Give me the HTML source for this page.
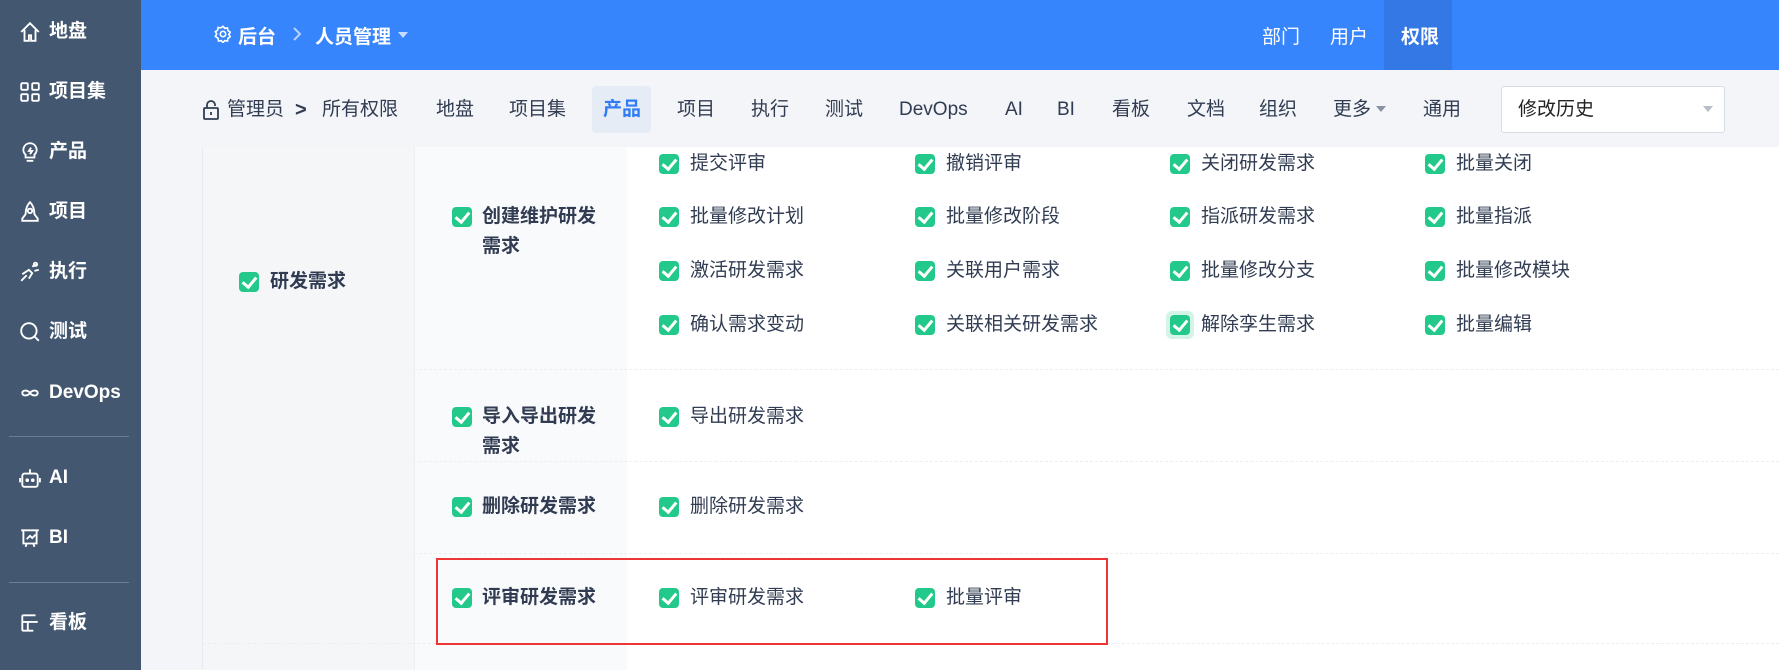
<!DOCTYPE html><html><head><meta charset="utf-8"><style>
*{margin:0;padding:0;box-sizing:border-box}
body{width:1779px;height:670px;overflow:hidden;background:#f3f5f8;font-family:"Liberation Sans","Noto Sans CJK SC",sans-serif;color:#313c52;position:relative}
.a{position:absolute;white-space:nowrap}
#side{left:0;top:0;width:141px;height:670px;background:#435870}
.si{position:absolute;left:19px;color:#fff;font-weight:bold;font-size:19px;line-height:24px;display:flex;align-items:center;gap:8px}
.si svg{width:22px;height:22px;fill:none;stroke:#fff;stroke-width:1.7}
.hr{position:absolute;left:9px;width:120px;height:1px;background:#6a7e94}
#top{left:141px;top:0;width:1638px;height:70px;background:#3785fd;color:#fff;font-size:19px}
.nav{font-size:19px;line-height:24px;top:98px;color:#313c52}
.cb{position:absolute;width:20px;height:20px;border-radius:4px;background:#22c98a}
.cb::after{content:"";position:absolute;left:6px;top:2px;width:6px;height:11px;border:solid #fff;border-width:0 3px 3px 0;transform:rotate(40deg)}
.t{font-size:19px;line-height:24px}
.b{font-weight:bold}
</style></head><body>
<div id="side" class="a">
<div class="si" style="top:20px"><svg viewBox="0 0 20 20"><path d="M2 10L10 2l8 8M5 8v10h4v-5h2v5h4V8"/></svg>地盘</div>
<div class="si" style="top:80px"><svg viewBox="0 0 20 20"><rect x="2" y="2" width="6" height="6" rx="1"/><rect x="12" y="2" width="6" height="6" rx="1"/><rect x="2" y="12" width="6" height="6" rx="1"/><rect x="12" y="12" width="6" height="6" rx="1"/></svg>项目集</div>
<div class="si" style="top:140px"><svg viewBox="0 0 20 20"><path d="M10 2a6 6 0 0 0-4 10.5V15h8v-2.5A6 6 0 0 0 10 2zM7 18h6M11 6l-2 3h3l-2 3"/></svg>产品</div>
<div class="si" style="top:200px"><svg viewBox="0 0 20 20"><path d="M10 1c-3 3-4 7-4 11l-3 4v2h14v-2l-3-4c0-4-1-8-4-11z"/><circle cx="10" cy="9" r="2"/></svg>项目</div>
<div class="si" style="top:260px"><svg viewBox="0 0 20 20"><path d="M2 18l5-5M3 12l6-4 3 3-3 5M12 5l5-2M14 9l4-1"/><circle cx="15" cy="3" r="1.5"/></svg>执行</div>
<div class="si" style="top:320px"><svg viewBox="0 0 20 20"><circle cx="9" cy="9" r="7"/><path d="M14 14l4 4"/></svg>测试</div>
<div class="si" style="top:381px"><svg viewBox="0 0 20 20"><path d="M10 10c-2-3-7-3-7 0s5 3 7 0 7-3 7 0-5 3-7 0"/></svg>DevOps</div>
<div class="hr" style="top:436px"></div>
<div class="si" style="top:466px"><svg viewBox="0 0 20 20"><rect x="3" y="6" width="14" height="12" rx="2"/><path d="M10 2v4M1 10v4M19 10v4"/><circle cx="7.5" cy="12" r=".8"/><circle cx="12.5" cy="12" r=".8"/></svg>AI</div>
<div class="si" style="top:526px"><svg viewBox="0 0 20 20"><path d="M2 3h16M4 3v12h12V3M7 15l-1 3M13 15l1 3M7 11l3-3 2 2 3-3"/></svg>BI</div>
<div class="hr" style="top:582px"></div>
<div class="si" style="top:611px"><svg viewBox="0 0 20 20"><path d="M3 3h12M3 3v14M3 9h14M3 17h10M8 9v8"/></svg>看板</div>
</div>
<div id="top" class="a">
<svg class="a" style="left:73px;top:25px" width="18" height="18" viewBox="0 0 20 20" fill="none" stroke="#fff" stroke-width="1.8"><circle cx="10" cy="10" r="3"/><path d="M10 1.5l2 2.2 3-.5.5 3 2.5 1.8-1.5 2.5 1.5 2.5-2.5 1.8-.5 3-3-.5-2 2.2-2-2.2-3 .5-.5-3L1.5 12.5 3 10 1.5 7.5 4 5.7l.5-3 3 .5z"/></svg>
<div class="a b" style="left:97px;top:22px;font-size:19px">后台</div>
<svg class="a" style="left:151px;top:26px" width="10" height="16" viewBox="0 0 10 16" fill="none" stroke="#b7d2fe" stroke-width="2"><path d="M2 2l6 6-6 6"/></svg>
<div class="a b" style="left:174px;top:22px;font-size:19px">人员管理</div>
<div class="a" style="left:257px;top:32px;border:5px solid transparent;border-top:6px solid #c8dbff"></div>
<div class="a" style="left:1121px;top:22px">部门</div>
<div class="a" style="left:1189px;top:22px">用户</div>
<div class="a" style="left:1243px;top:0;width:68px;height:70px;background:#3478e6"></div>
<div class="a b" style="left:1260px;top:22px">权限</div>
</div>
<svg class="a" style="left:202px;top:100px" width="18" height="20" viewBox="0 0 18 20" fill="none" stroke="#313c52" stroke-width="1.8"><rect x="2" y="8" width="14" height="11" rx="1"/><path d="M5 8V5a4 4 0 0 1 8 0v1M9 12v3"/></svg>
<div class="a nav" style="left:227px">管理员</div>
<div class="a nav b" style="left:295px;font-size:20px">&gt;</div>
<div class="a nav" style="left:322px">所有权限</div>
<div class="a nav" style="left:436px">地盘</div>
<div class="a nav" style="left:509px">项目集</div>
<div class="a" style="left:592px;top:86px;width:59px;height:47px;background:#e6ecf5;border-radius:4px"></div>
<div class="a nav b" style="left:603px;color:#2f7cf5">产品</div>
<div class="a nav" style="left:677px">项目</div>
<div class="a nav" style="left:751px">执行</div>
<div class="a nav" style="left:825px">测试</div>
<div class="a nav" style="left:899px">DevOps</div>
<div class="a nav" style="left:1005px">AI</div>
<div class="a nav" style="left:1057px">BI</div>
<div class="a nav" style="left:1112px">看板</div>
<div class="a nav" style="left:1187px">文档</div>
<div class="a nav" style="left:1259px">组织</div>
<div class="a nav" style="left:1333px">更多</div>
<div class="a" style="left:1376px;top:106px;border:5px solid transparent;border-top:6px solid #8a93a3"></div>
<div class="a nav" style="left:1423px">通用</div>
<div class="a" style="left:1501px;top:86px;width:224px;height:47px;background:#fff;border:1px solid #d8dce3;border-radius:3px"></div>
<div class="a nav" style="left:1518px;color:#222">修改历史</div>
<div class="a" style="left:1703px;top:106px;border:5px solid transparent;border-top:6px solid #b8bec8"></div>

<div class="a" style="left:202px;top:147px;width:1577px;height:523px;background:#fff;border-left:1px solid #e8ebef"></div>
<div class="a" style="left:203px;top:147px;width:211px;height:523px;background:#f5f6f8"></div>
<div class="a" style="left:414px;top:147px;width:213px;height:523px;background:#f9fafb;border-left:1px solid #edf0f3"></div>
<div class="a" style="left:414px;top:369px;width:1365px;border-top:1px dashed #eceef2"></div>
<div class="a" style="left:414px;top:461px;width:1365px;border-top:1px dashed #eceef2"></div>
<div class="a" style="left:414px;top:553px;width:1365px;border-top:1px dashed #eceef2"></div>
<div class="a" style="left:203px;top:643px;width:1576px;border-top:1px dashed #eceef2"></div>

<div class="cb" style="left:239px;top:272px"></div><div class="a t b" style="left:270px;top:270px">研发需求</div>
<div class="cb" style="left:452px;top:207px"></div><div class="a t b" style="left:482px;top:205px">创建维护研发</div><div class="a t b" style="left:482px;top:235px">需求</div>
<div class="cb" style="left:452px;top:407px"></div><div class="a t b" style="left:482px;top:405px">导入导出研发</div><div class="a t b" style="left:482px;top:435px">需求</div>
<div class="cb" style="left:452px;top:497px"></div><div class="a t b" style="left:482px;top:495px">删除研发需求</div>
<div class="cb" style="left:452px;top:588px"></div><div class="a t b" style="left:482px;top:586px">评审研发需求</div>

<div class="cb" style="left:659px;top:154px"></div><div class="a t" style="left:690px;top:152px">提交评审</div>
<div class="cb" style="left:915px;top:154px"></div><div class="a t" style="left:946px;top:152px">撤销评审</div>
<div class="cb" style="left:1170px;top:154px"></div><div class="a t" style="left:1201px;top:152px">关闭研发需求</div>
<div class="cb" style="left:1425px;top:154px"></div><div class="a t" style="left:1456px;top:152px">批量关闭</div>
<div class="cb" style="left:659px;top:207px"></div><div class="a t" style="left:690px;top:205px">批量修改计划</div>
<div class="cb" style="left:915px;top:207px"></div><div class="a t" style="left:946px;top:205px">批量修改阶段</div>
<div class="cb" style="left:1170px;top:207px"></div><div class="a t" style="left:1201px;top:205px">指派研发需求</div>
<div class="cb" style="left:1425px;top:207px"></div><div class="a t" style="left:1456px;top:205px">批量指派</div>
<div class="cb" style="left:659px;top:261px"></div><div class="a t" style="left:690px;top:259px">激活研发需求</div>
<div class="cb" style="left:915px;top:261px"></div><div class="a t" style="left:946px;top:259px">关联用户需求</div>
<div class="cb" style="left:1170px;top:261px"></div><div class="a t" style="left:1201px;top:259px">批量修改分支</div>
<div class="cb" style="left:1425px;top:261px"></div><div class="a t" style="left:1456px;top:259px">批量修改模块</div>
<div class="cb" style="left:659px;top:315px"></div><div class="a t" style="left:690px;top:313px">确认需求变动</div>
<div class="cb" style="left:915px;top:315px"></div><div class="a t" style="left:946px;top:313px">关联相关研发需求</div>
<div class="a" style="left:1166px;top:311px;width:28px;height:28px;border-radius:6px;background:#d5f4e8"></div>
<div class="cb" style="left:1170px;top:315px"></div><div class="a t" style="left:1201px;top:313px">解除孪生需求</div>
<div class="cb" style="left:1425px;top:315px"></div><div class="a t" style="left:1456px;top:313px">批量编辑</div>
<div class="cb" style="left:659px;top:407px"></div><div class="a t" style="left:690px;top:405px">导出研发需求</div>
<div class="cb" style="left:659px;top:497px"></div><div class="a t" style="left:690px;top:495px">删除研发需求</div>
<div class="cb" style="left:659px;top:588px"></div><div class="a t" style="left:690px;top:586px">评审研发需求</div>
<div class="cb" style="left:915px;top:588px"></div><div class="a t" style="left:946px;top:586px">批量评审</div>
<div class="a" style="left:436px;top:558px;width:672px;height:87px;border:2px solid #ee3535"></div>
</body></html>
